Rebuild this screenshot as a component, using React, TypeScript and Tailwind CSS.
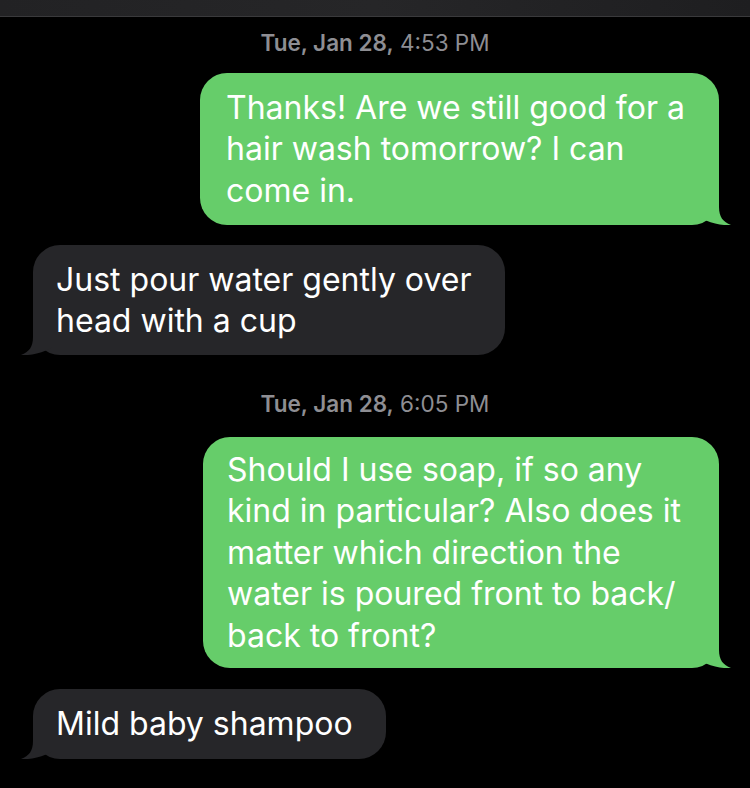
import React from "react";

function TailRight({ color }: { color: string }) {
  return (
    <svg
      className="absolute bottom-0 right-[-12px]"
      width="32"
      height="28"
      viewBox="0 0 32 28"
    >
      <path
        d="M20 0 L20 10 C20 20 24 25 32 28 C26 28.6 16 27.5 7 23.5 L0 20 L0 0 Z"
        fill={color}
      />
    </svg>
  );
}

function TailLeft({ color }: { color: string }) {
  return (
    <svg
      className="absolute bottom-0 left-[-12px]"
      width="32"
      height="28"
      viewBox="0 0 32 28"
    >
      <path
        d="M12 0 L12 10 C12 20 8 25 0 28 C6 28.6 16 27.5 25 23.5 L32 20 L32 0 Z"
        fill={color}
      />
    </svg>
  );
}

function Stamp({ day, time }: { day: string; time: string }) {
  return (
    <div className="h-[24px] leading-[24px] text-center text-[22.5px] text-[#8e8e93] whitespace-nowrap">
      <span className="font-semibold">{day}</span>
      <span className="font-normal"> {time}</span>
    </div>
  );
}

export default function App() {
  return (
    <div
      className="w-[750px] h-[788px] bg-black overflow-hidden flex flex-col"
      style={{ fontFamily: "Inter, 'Noto Sans', sans-serif" }}
    >
      <div className="h-[17px] shrink-0 bg-gradient-to-r from-[#222224] via-[#262628] to-[#1e1e20] border-b border-[#3a3a3c]" />

      <div className="mt-[14px]">
        <Stamp day="Tue, Jan 28," time="4:53 PM" />
      </div>

      <div className="mt-[18px] flex justify-end pr-[31px]">
        <div className="relative w-[519px] h-[152px] rounded-[27px] bg-[#66cd6a] pl-[26px] flex flex-col justify-center text-white text-[32px] leading-[41.5px] whitespace-nowrap">
          <div>Thanks! Are we still good for a</div>
          <div>hair wash tomorrow? I can</div>
          <div>come in.</div>
          <TailRight color="#66cd6a" />
        </div>
      </div>

      <div className="mt-[20px] flex justify-start pl-[33px]">
        <div className="relative w-[472px] h-[110px] rounded-[27px] bg-[#262629] pl-[23px] flex flex-col justify-center text-white text-[32px] leading-[41.5px] whitespace-nowrap">
          <div>Just pour water gently over</div>
          <div>head with a cup</div>
          <TailLeft color="#262629" />
        </div>
      </div>

      <div className="mt-[37px]">
        <Stamp day="Tue, Jan 28," time="6:05 PM" />
      </div>

      <div className="mt-[21px] flex justify-end pr-[31px]">
        <div className="relative w-[516px] h-[231px] rounded-[27px] bg-[#66cd6a] pl-[24px] flex flex-col justify-center text-white text-[32px] leading-[41.5px] whitespace-nowrap">
          <div>Should I use soap, if so any</div>
          <div>kind in particular? Also does it</div>
          <div>matter which direction the</div>
          <div>water is poured front to back/</div>
          <div>back to front?</div>
          <TailRight color="#66cd6a" />
        </div>
      </div>

      <div className="mt-[21px] flex justify-start pl-[33px]">
        <div className="relative w-[353px] h-[70px] rounded-[27px] bg-[#262629] pl-[23px] flex flex-col justify-center text-white text-[32px] leading-[41.5px] whitespace-nowrap">
          <div>Mild baby shampoo</div>
          <TailLeft color="#262629" />
        </div>
      </div>
    </div>
  );
}
